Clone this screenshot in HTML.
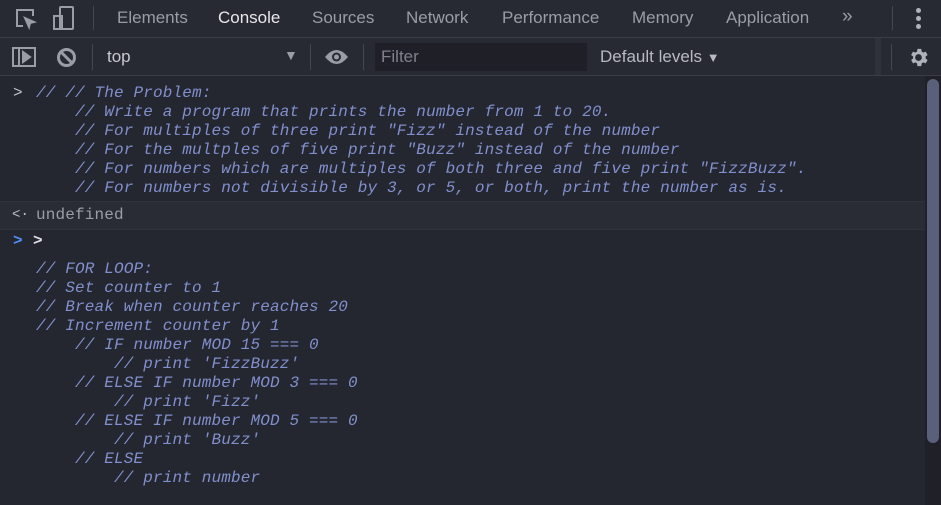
<html><head><style>
body{margin:0;width:941px;height:505px;background:#242630;overflow:hidden;font-family:"Liberation Sans",sans-serif;position:relative}
.bar{position:absolute;left:0;width:941px;background:#282a33;border-bottom:1px solid #3a3c46}
.t{position:absolute;color:#9a9ca6;font-size:17px}
.c{position:absolute;font-family:"Liberation Mono",monospace;font-size:16px;letter-spacing:0.15px;font-style:italic;color:#8190cc;white-space:pre;line-height:19px}
.sep{position:absolute;width:1px;background:#444650}
</style></head><body>
<div class="bar" style="top:0;height:37px"></div>
<div class="bar" style="top:38px;height:37px"></div>
<svg style="position:absolute;left:14px;top:7px" width="24" height="24" viewBox="0 0 24 24" fill="none" stroke="#9a9ca6" stroke-width="2"><path d="M9 19H3V3h16v6"/><path d="M11 11l9 4-4 1-1 4z" fill="#9a9ca6"/></svg>
<svg style="position:absolute;left:52px;top:5px" width="24" height="26" viewBox="0 0 24 26" fill="none" stroke="#9a9ca6" stroke-width="2"><rect x="8" y="2" width="13" height="22" rx="1"/><rect x="2" y="11" width="8" height="13"/></svg>
<div class="sep" style="left:93px;top:6px;height:24px"></div>
<div class="t" style="left:117px;top:8px">Elements</div>
<div class="t" style="left:218px;top:8px;color:#e8e8ea">Console</div>
<div class="t" style="left:312px;top:8px">Sources</div>
<div class="t" style="left:406px;top:8px">Network</div>
<div class="t" style="left:502px;top:8px">Performance</div>
<div class="t" style="left:632px;top:8px">Memory</div>
<div class="t" style="left:726px;top:8px">Application</div>
<div class="t" style="left:842px;top:6px;font-size:19px">»</div>
<div class="sep" style="left:892px;top:6px;height:24px"></div>
<div style="position:absolute;left:916px;top:8px;width:5px">
<div style="width:5px;height:5px;border-radius:50%;background:#b0b2ba;margin-bottom:3px"></div><div style="width:5px;height:5px;border-radius:50%;background:#b0b2ba;margin-bottom:3px"></div><div style="width:5px;height:5px;border-radius:50%;background:#b0b2ba"></div></div>
<svg style="position:absolute;left:12px;top:47px" width="24" height="20" viewBox="0 0 24 20" fill="none" stroke="#9a9ca6" stroke-width="2"><rect x="1" y="1" width="22" height="18"/><path d="M7 1v18"/><path d="M11 5l7 5-7 5z" fill="#9a9ca6"/></svg>
<svg style="position:absolute;left:56px;top:47px" width="21" height="21" viewBox="0 0 21 21" fill="none" stroke="#9a9ca6" stroke-width="3"><circle cx="10.5" cy="10.5" r="8"/><path d="M5 5l11 11"/></svg>
<div class="sep" style="left:92px;top:44px;height:26px"></div>
<div class="t" style="left:107px;top:47px;color:#c8c9ce">top</div>
<div class="t" style="left:284px;top:47px;font-size:14px">▼</div>
<div class="sep" style="left:310px;top:44px;height:26px"></div>
<svg style="position:absolute;left:324px;top:48px" width="25" height="18" viewBox="0 0 25 18"><path d="M1 9Q12.5-5 24 9Q12.5 23 1 9z" fill="#9a9ca6"/><circle cx="12.5" cy="9" r="4.5" fill="#282a33"/><circle cx="12.5" cy="9" r="2.5" fill="#9a9ca6"/></svg>
<div class="sep" style="left:363px;top:44px;height:26px"></div>
<div style="position:absolute;left:375px;top:43px;width:212px;height:28px;background:#1f2027"></div>
<div class="t" style="left:381px;top:47px;color:#7e808a">Filter</div>
<div class="t" style="left:600px;top:47px;color:#b8bac0">Default levels <span style="font-size:13px">▼</span></div>
<div style="position:absolute;left:875px;top:38px;width:6px;height:37px;background:#30323b"></div>
<div class="sep" style="left:891px;top:44px;height:26px"></div>
<svg style="position:absolute;left:907px;top:46px" width="23" height="23" viewBox="0 0 24 24"><path fill="#b0b2ba" d="M19.4 13a7.5 7.5 0 000-2l2.1-1.6-2-3.5-2.5 1a7.6 7.6 0 00-1.7-1L14.9 3h-4l-.4 2.9a7.6 7.6 0 00-1.7 1l-2.5-1-2 3.5L6.4 11a7.5 7.5 0 000 2l-2.1 1.6 2 3.5 2.5-1a7.6 7.6 0 001.7 1l.4 2.9h4l.4-2.9a7.6 7.6 0 001.7-1l2.5 1 2-3.5zM12 15.5a3.5 3.5 0 110-7 3.5 3.5 0 010 7z"/></svg>
<div style="position:absolute;left:0;top:201px;width:925px;height:27px;background:#2a2c35;border-top:1px solid #30323b;border-bottom:1px solid #30323b"></div>
<div style="position:absolute;left:925px;top:76px;width:16px;height:429px;background:#1f2028"></div>
<div style="position:absolute;left:927px;top:79px;width:12px;height:364px;border-radius:6px;background:#5a5f7a"></div>
<div class="c" style="left:13px;top:84px;font-style:normal;color:#c0c2c8">&gt;</div>
<div class="c" style="left:36px;top:84px">// // The Problem:
    // Write a program that prints the number from 1 to 20.
    // For multiples of three print "Fizz" instead of the number
    // For the multples of five print "Buzz" instead of the number
    // For numbers which are multiples of both three and five print "FizzBuzz".
    // For numbers not divisible by 3, or 5, or both, print the number as is.</div>
<div class="c" style="left:12px;top:206px;font-style:normal;color:#c0c2c8;font-size:14px">&lt;·</div>
<div class="c" style="left:36px;top:206px;font-style:normal;color:#9a9ca6">undefined</div>
<div class="c" style="left:13px;top:232px;font-style:normal;color:#4f8ff7;font-weight:bold">&gt;</div>
<div class="c" style="left:33px;top:232px;font-style:normal;color:#e0e0e4;font-weight:bold">&gt;</div>
<div class="c" style="left:36px;top:260px">// FOR LOOP:
// Set counter to 1
// Break when counter reaches 20
// Increment counter by 1
    // IF number MOD 15 === 0
        // print 'FizzBuzz'
    // ELSE IF number MOD 3 === 0
        // print 'Fizz'
    // ELSE IF number MOD 5 === 0
        // print 'Buzz'
    // ELSE
        // print number</div>
</body></html>
